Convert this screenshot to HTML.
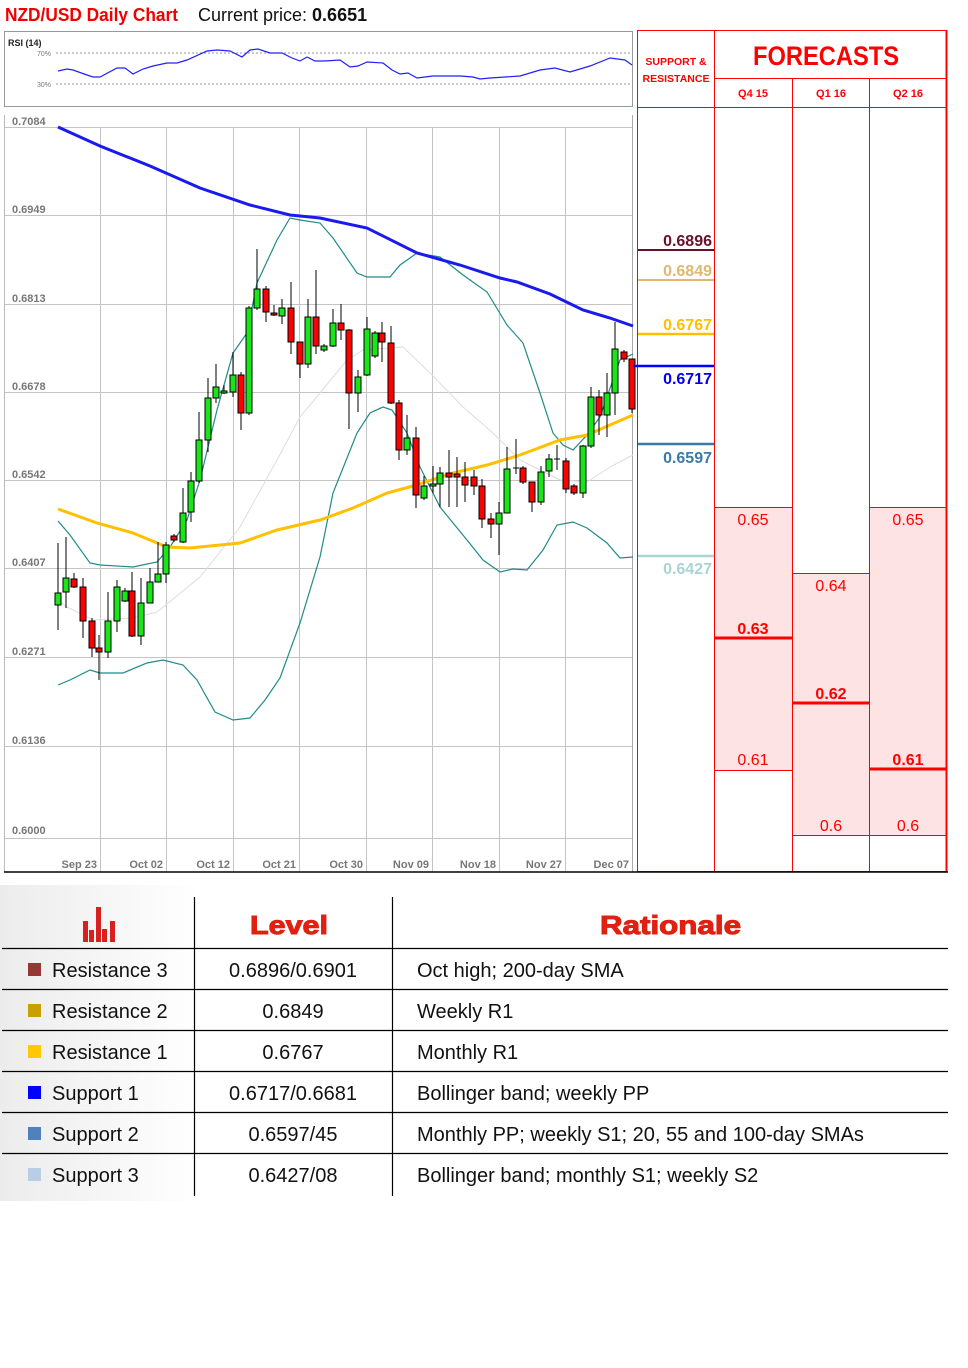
<!DOCTYPE html>
<html><head><meta charset="utf-8"><style>
body{margin:0;width:968px;height:1368px;background:#fff;overflow:hidden;font-family:"Liberation Sans",sans-serif;}
svg{position:absolute;left:0;top:0}
</style></head><body>
<svg width="968" height="1368" viewBox="0 0 968 1368" font-family="Liberation Sans, sans-serif">
<defs><linearGradient id="bg" x1="0" x2="1" y1="0" y2="0"><stop offset="0" stop-color="#ececec"/><stop offset="1" stop-color="#fff"/></linearGradient></defs>
<text x="5" y="21" font-size="18" font-weight="bold" fill="#f00000" textLength="173" lengthAdjust="spacingAndGlyphs">NZD/USD Daily Chart</text>
<text x="198" y="21" font-size="18" fill="#111">Current price: <tspan font-weight="bold">0.6651</tspan></text>
<rect x="4.5" y="31.5" width="628" height="75" fill="#fff" stroke="#999"/>
<text x="8" y="46" font-size="9" font-weight="bold" fill="#222">RSI (14)</text>
<text x="37" y="56" font-size="7" fill="#777">70%</text>
<text x="37" y="87" font-size="7" fill="#777">30%</text>
<line x1="56" x2="632" y1="53" y2="53" stroke="#777" stroke-dasharray="2,2" stroke-width="0.8"/>
<line x1="56" x2="632" y1="84" y2="84" stroke="#777" stroke-dasharray="2,2" stroke-width="0.8"/>
<polyline fill="none" stroke="#2020ff" stroke-width="1.2" points="58,71 67,69 73,70 87,75 93,77 100,77 117,68 125,68 133,74 143,69 153,66 167,63 177,63 187,60 207,51 217,50 230,51 242,57 250,50 258,49 270,53 282,53 292,58 300,61 307,57 315,61 325,61 340,60 350,67 358,66 367,62 383,63 392,70 400,74 408,73 417,78 433,76 447,76 460,76 473,77 480,79 490,78 520,76 540,70 555,68 570,72 590,66 610,58 625,60 632,65"/>
<line x1="4.5" x2="4.5" y1="115" y2="872" stroke="#bbb"/>
<line x1="632.5" x2="632.5" y1="115" y2="872" stroke="#aaa"/>
<g stroke="#c4c4c4" stroke-width="1">
<line x1="5" x2="632" y1="127.5" y2="127.5"/><line x1="5" x2="632" y1="215.5" y2="215.5"/><line x1="5" x2="632" y1="304.5" y2="304.5"/><line x1="5" x2="632" y1="392.5" y2="392.5"/><line x1="5" x2="632" y1="480.5" y2="480.5"/><line x1="5" x2="632" y1="568.5" y2="568.5"/><line x1="5" x2="632" y1="657.5" y2="657.5"/><line x1="5" x2="632" y1="746.5" y2="746.5"/><line x1="5" x2="632" y1="838.5" y2="838.5"/>
<line x1="100.5" x2="100.5" y1="127" y2="872"/><line x1="166.5" x2="166.5" y1="127" y2="872"/><line x1="233.5" x2="233.5" y1="127" y2="872"/><line x1="299.5" x2="299.5" y1="127" y2="872"/><line x1="366.5" x2="366.5" y1="127" y2="872"/><line x1="432.5" x2="432.5" y1="127" y2="872"/><line x1="499.5" x2="499.5" y1="127" y2="872"/><line x1="565.5" x2="565.5" y1="127" y2="872"/>
</g>
<g font-size="11" font-weight="bold" fill="#777">
<text x="12" y="125">0.7084</text><text x="12" y="213">0.6949</text><text x="12" y="302">0.6813</text><text x="12" y="390">0.6678</text><text x="12" y="478">0.6542</text><text x="12" y="566">0.6407</text><text x="12" y="655">0.6271</text><text x="12" y="744">0.6136</text><text x="12" y="834">0.6000</text>
</g>
<g font-size="11" font-weight="bold" fill="#777" text-anchor="end">
<text x="97" y="868">Sep 23</text><text x="163" y="868">Oct 02</text><text x="230" y="868">Oct 12</text><text x="296" y="868">Oct 21</text><text x="363" y="868">Oct 30</text><text x="429" y="868">Nov 09</text><text x="496" y="868">Nov 18</text><text x="562" y="868">Nov 27</text><text x="629" y="868">Dec 07</text>
</g>
<polyline fill="none" stroke="#ddd" stroke-width="1" points="58,600 67,607 93,620 133,618 157,612 200,577 240,527 277,460 300,417 320,393 347,360 363,350 403,347 430,373 463,407 493,433 520,460 560,480 587,482 610,467 633,455"/>
<polyline fill="none" stroke="#208a8a" stroke-width="1.2" points="58,521 70,535 90,563 100,565 133,567 157,562 170,547 187,520 200,480 217,410 233,353 247,333 257,283 277,240 290,218 300,220 320,223 333,238 357,273 367,277 390,277 400,265 417,253 440,257 463,275 487,292 507,325 523,343 540,393 553,433 563,445 573,450 587,435 600,417 620,360 633,354"/>
<polyline fill="none" stroke="#208a8a" stroke-width="1.2" points="58,685 70,680 90,670 100,673 123,673 147,663 163,660 183,665 197,680 215,712 233,720 250,718 265,700 280,678 300,623 320,557 333,493 357,433 370,413 383,407 392,410 407,433 420,467 440,507 467,540 483,560 500,572 513,569 527,570 543,550 557,525 573,522 587,528 607,543 620,558 633,557"/>
<polyline fill="none" stroke="#1a1aee" stroke-width="3" points="58,127 100,146 150,166 200,188 250,205 290,215 320,218 367,228 417,253 460,265 500,278 517,282 550,294 583,310 610,318 633,326"/>
<polyline fill="none" stroke="#ffc000" stroke-width="3" points="58,509 97,523 133,533 167,547 190,548 240,543 277,530 320,520 353,508 387,493 413,486 453,473 487,465 520,455 560,440 587,435 610,425 633,415"/>
</svg>
<svg width="968" height="1368" viewBox="0 0 968 1368" font-family="Liberation Sans, sans-serif">
<g stroke="#000" stroke-width="1">
<line x1="58" x2="58" y1="543" y2="630"/><rect x="55" y="593" width="6" height="12" fill="#19e619"/>
<line x1="66" x2="66" y1="537" y2="608"/><rect x="63" y="578" width="6" height="14" fill="#19e619"/>
<line x1="74" x2="74" y1="573" y2="588"/><rect x="71" y="579" width="6" height="8" fill="#f00"/>
<line x1="83" x2="83" y1="578" y2="638"/><rect x="80" y="587" width="6" height="34" fill="#f00"/>
<line x1="92" x2="92" y1="618" y2="657"/><rect x="89" y="621" width="6" height="27" fill="#f00"/>
<line x1="99" x2="99" y1="635" y2="680"/><rect x="96" y="648" width="6" height="4" fill="#f00"/>
<line x1="108" x2="108" y1="592" y2="658"/><rect x="105" y="621" width="6" height="31" fill="#19e619"/>
<line x1="117" x2="117" y1="580" y2="632"/><rect x="114" y="587" width="6" height="34" fill="#19e619"/>
<line x1="125" x2="125" y1="588" y2="602"/><rect x="122" y="591" width="6" height="10" fill="#19e619"/>
<line x1="132" x2="132" y1="572" y2="637"/><rect x="129" y="591" width="6" height="45" fill="#f00"/>
<line x1="141" x2="141" y1="578" y2="645"/><rect x="138" y="603" width="6" height="33" fill="#19e619"/>
<line x1="150" x2="150" y1="568" y2="603"/><rect x="147" y="582" width="6" height="21" fill="#19e619"/>
<line x1="158" x2="158" y1="542" y2="582"/><rect x="155" y="574" width="6" height="8" fill="#19e619"/>
<line x1="166" x2="166" y1="542" y2="583"/><rect x="163" y="545" width="6" height="29" fill="#19e619"/>
<line x1="174" x2="174" y1="534" y2="542"/><rect x="171" y="536" width="6" height="4" fill="#f00"/>
<line x1="183" x2="183" y1="488" y2="543"/><rect x="180" y="513" width="6" height="29" fill="#19e619"/>
<line x1="191" x2="191" y1="472" y2="522"/><rect x="188" y="481" width="6" height="31" fill="#19e619"/>
<line x1="199" x2="199" y1="412" y2="483"/><rect x="196" y="440" width="6" height="41" fill="#19e619"/>
<line x1="208" x2="208" y1="378" y2="452"/><rect x="205" y="398" width="6" height="42" fill="#19e619"/>
<line x1="216" x2="216" y1="364" y2="403"/><rect x="213" y="387" width="6" height="11" fill="#19e619"/>
<line x1="224" x2="224" y1="385" y2="394"/><rect x="221" y="391" width="6" height="2" fill="#19e619"/>
<line x1="233" x2="233" y1="352" y2="397"/><rect x="230" y="375" width="6" height="17" fill="#19e619"/>
<line x1="241" x2="241" y1="372" y2="430"/><rect x="238" y="375" width="6" height="38" fill="#f00"/>
<line x1="249" x2="249" y1="306" y2="415"/><rect x="246" y="308" width="6" height="105" fill="#19e619"/>
<line x1="257" x2="257" y1="249" y2="310"/><rect x="254" y="289" width="6" height="19" fill="#19e619"/>
<line x1="266" x2="266" y1="286" y2="322"/><rect x="263" y="289" width="6" height="23" fill="#f00"/>
<line x1="274" x2="274" y1="305" y2="316"/><rect x="271" y="313" width="6" height="2" fill="#f00"/>
<line x1="282" x2="282" y1="299" y2="324"/><rect x="279" y="308" width="6" height="8" fill="#19e619"/>
<line x1="291" x2="291" y1="282" y2="354"/><rect x="288" y="308" width="6" height="34" fill="#f00"/>
<line x1="300" x2="300" y1="342" y2="378"/><rect x="297" y="342" width="6" height="22" fill="#f00"/>
<line x1="308" x2="308" y1="299" y2="368"/><rect x="305" y="317" width="6" height="47" fill="#19e619"/>
<line x1="316" x2="316" y1="270" y2="354"/><rect x="313" y="317" width="6" height="29" fill="#f00"/>
<line x1="324" x2="324" y1="344" y2="352"/><rect x="321" y="346" width="6" height="4" fill="#19e619"/>
<line x1="333" x2="333" y1="309" y2="347"/><rect x="330" y="323" width="6" height="23" fill="#19e619"/>
<line x1="341" x2="341" y1="304" y2="340"/><rect x="338" y="323" width="6" height="7" fill="#f00"/>
<line x1="349" x2="349" y1="329" y2="429"/><rect x="346" y="330" width="6" height="63" fill="#f00"/>
<line x1="358" x2="358" y1="370" y2="412"/><rect x="355" y="377" width="6" height="16" fill="#19e619"/>
<line x1="367" x2="367" y1="317" y2="376"/><rect x="364" y="329" width="6" height="46" fill="#19e619"/>
<line x1="375" x2="375" y1="331" y2="358"/><rect x="372" y="333" width="6" height="23" fill="#19e619"/>
<line x1="382" x2="382" y1="322" y2="362"/><rect x="379" y="333" width="6" height="9" fill="#f00"/>
<line x1="391" x2="391" y1="326" y2="404"/><rect x="388" y="343" width="6" height="60" fill="#f00"/>
<line x1="399" x2="399" y1="400" y2="460"/><rect x="396" y="403" width="6" height="47" fill="#f00"/>
<line x1="407" x2="407" y1="415" y2="455"/><rect x="404" y="438" width="6" height="12" fill="#19e619"/>
<line x1="416" x2="416" y1="427" y2="508"/><rect x="413" y="438" width="6" height="57" fill="#f00"/>
<line x1="424" x2="424" y1="476" y2="500"/><rect x="421" y="486" width="6" height="12" fill="#19e619"/>
<line x1="433" x2="433" y1="466" y2="493"/><rect x="430" y="484" width="6" height="2" fill="#19e619"/>
<line x1="440" x2="440" y1="467" y2="507"/><rect x="437" y="473" width="6" height="11" fill="#19e619"/>
<line x1="449" x2="449" y1="450" y2="507"/><rect x="446" y="473" width="6" height="4" fill="#f00"/>
<line x1="457" x2="457" y1="457" y2="507"/><rect x="454" y="474" width="6" height="3" fill="#f00"/>
<line x1="465" x2="465" y1="462" y2="502"/><rect x="462" y="477" width="6" height="8" fill="#f00"/>
<line x1="474" x2="474" y1="470" y2="495"/><rect x="471" y="477" width="6" height="9" fill="#f00"/>
<line x1="482" x2="482" y1="479" y2="528"/><rect x="479" y="486" width="6" height="33" fill="#f00"/>
<line x1="491" x2="491" y1="513" y2="538"/><rect x="488" y="519" width="6" height="5" fill="#f00"/>
<line x1="499" x2="499" y1="502" y2="555"/><rect x="496" y="513" width="6" height="11" fill="#19e619"/>
<line x1="507" x2="507" y1="447" y2="513"/><rect x="504" y="469" width="6" height="44" fill="#19e619"/>
<line x1="516" x2="516" y1="439" y2="474"/><line x1="513" x2="519" y1="468" y2="468"/>
<line x1="523" x2="523" y1="466" y2="484"/><rect x="520" y="468" width="6" height="14" fill="#f00"/>
<line x1="532" x2="532" y1="482" y2="512"/><rect x="529" y="482" width="6" height="20" fill="#f00"/>
<line x1="541" x2="541" y1="466" y2="505"/><rect x="538" y="472" width="6" height="30" fill="#19e619"/>
<line x1="549" x2="549" y1="454" y2="477"/><rect x="546" y="459" width="6" height="12" fill="#19e619"/>
<line x1="557" x2="557" y1="445" y2="470"/><line x1="554" x2="560" y1="459" y2="459"/>
<line x1="566" x2="566" y1="458" y2="493"/><rect x="563" y="461" width="6" height="28" fill="#f00"/>
<line x1="574" x2="574" y1="484" y2="495"/><rect x="571" y="486" width="6" height="7" fill="#f00"/>
<line x1="583" x2="583" y1="445" y2="498"/><rect x="580" y="446" width="6" height="47" fill="#19e619"/>
<line x1="591" x2="591" y1="387" y2="448"/><rect x="588" y="397" width="6" height="49" fill="#19e619"/>
<line x1="599" x2="599" y1="390" y2="435"/><rect x="596" y="397" width="6" height="18" fill="#f00"/>
<line x1="607" x2="607" y1="373" y2="437"/><rect x="604" y="393" width="6" height="22" fill="#19e619"/>
<line x1="615" x2="615" y1="322" y2="415"/><rect x="612" y="349" width="6" height="44" fill="#19e619"/>
<line x1="624" x2="624" y1="350" y2="362"/><rect x="621" y="352" width="6" height="7" fill="#f00"/>
<line x1="632" x2="632" y1="359" y2="413"/><rect x="629" y="359" width="6" height="50" fill="#f00"/>
</g>
<rect x="714" y="507" width="78" height="263" fill="#fde3e3"/>
<rect x="792" y="573" width="77" height="262" fill="#fde3e3"/>
<rect x="869" y="507" width="78" height="328" fill="#fde3e3"/>
<g stroke="#f00" stroke-width="1" fill="none">
<rect x="637.5" y="30.5" width="309" height="841"/>
<line x1="714.5" x2="714.5" y1="30" y2="872"/>
<line x1="792.5" x2="792.5" y1="78" y2="872"/>
<line x1="869.5" x2="869.5" y1="78" y2="872"/>
<line x1="714" x2="947" y1="78.5" y2="78.5"/>
<line x1="637" x2="947" y1="107.5" y2="107.5"/>
<line x1="714" x2="792" y1="507.5" y2="507.5"/><line x1="869" x2="947" y1="507.5" y2="507.5"/>
<line x1="714" x2="792" y1="770.5" y2="770.5"/>
<line x1="792" x2="869" y1="573.5" y2="573.5"/>
<line x1="792" x2="947" y1="835.5" y2="835.5"/>
</g>
<line x1="946.5" x2="946.5" y1="30" y2="872" stroke="#f00" stroke-width="2"/>
<g stroke="#f00" stroke-width="3">
<line x1="714" x2="792" y1="638" y2="638"/><line x1="792" x2="869" y1="703" y2="703"/><line x1="869" x2="947" y1="769" y2="769"/>
</g>
<line x1="4" x2="948" y1="872" y2="872" stroke="#000" stroke-width="1.5"/>
<text x="676" y="65" font-size="10.5" font-weight="bold" fill="#f00" text-anchor="middle">SUPPORT &amp;</text>
<text x="676" y="82" font-size="10.5" font-weight="bold" fill="#f00" text-anchor="middle">RESISTANCE</text>
<text x="753" y="65" font-size="27" font-weight="bold" fill="#f00" textLength="146" lengthAdjust="spacingAndGlyphs">FORECASTS</text>
<g font-size="11" font-weight="bold" fill="#f00" text-anchor="middle"><text x="753" y="97">Q4 15</text><text x="831" y="97">Q1 16</text><text x="908" y="97">Q2 16</text></g>
<g font-size="16" fill="#f00" text-anchor="middle">
<text x="753" y="525">0.65</text><text x="753" y="765">0.61</text><text x="831" y="591">0.64</text><text x="831" y="831">0.6</text><text x="908" y="525">0.65</text><text x="908" y="831">0.6</text>
<text x="753" y="634" font-weight="bold">0.63</text><text x="831" y="699" font-weight="bold">0.62</text><text x="908" y="765" font-weight="bold">0.61</text>
</g>
<g stroke-width="2.5">
<line x1="638" x2="714" y1="250" y2="250" stroke="#6b0f2a" stroke-width="2"/>
<line x1="638" x2="714" y1="280" y2="280" stroke="#e0b870" stroke-width="2"/>
<line x1="638" x2="714" y1="334" y2="334" stroke="#ffc000"/>
<line x1="633" x2="714" y1="366" y2="366" stroke="#0000ff"/>
<line x1="638" x2="714" y1="444" y2="444" stroke="#3a7ca5"/>
<line x1="638" x2="714" y1="556" y2="556" stroke="#a9d4d4"/>
</g>
<g font-size="16" font-weight="bold" text-anchor="end">
<text x="712" y="246" fill="#6b0f2a">0.6896</text>
<text x="712" y="276" fill="#e0b870">0.6849</text>
<text x="712" y="330" fill="#ffc000">0.6767</text>
<text x="712" y="384" fill="#0000ee">0.6717</text>
<text x="712" y="463" fill="#3a7ca5">0.6597</text>
<text x="712" y="574" fill="#a9d4d4">0.6427</text>
</g>
<rect x="0" y="885" width="200" height="316" fill="url(#bg)"/>
<g fill="#d92020"><rect x="83" y="921" width="5" height="21"/><rect x="89" y="930" width="5" height="12"/><rect x="96" y="907" width="5" height="35"/><rect x="102" y="929" width="5" height="13"/><rect x="110" y="921" width="5" height="21"/></g>
<text x="250" y="934" font-size="26" font-weight="900" fill="#e02010" stroke="#e02010" stroke-width="1" textLength="78" lengthAdjust="spacingAndGlyphs">Level</text>
<text x="600" y="934" font-size="26" font-weight="900" fill="#e02010" stroke="#e02010" stroke-width="1" textLength="141" lengthAdjust="spacingAndGlyphs">Rationale</text>
<g stroke="#000" stroke-width="1.2">
<line x1="194.5" x2="194.5" y1="897" y2="1196"/><line x1="392.5" x2="392.5" y1="897" y2="1196"/>
<line x1="2" x2="948" y1="948.5" y2="948.5"/><line x1="2" x2="948" y1="989.5" y2="989.5"/><line x1="2" x2="948" y1="1030.5" y2="1030.5"/><line x1="2" x2="948" y1="1071.5" y2="1071.5"/><line x1="2" x2="948" y1="1112.5" y2="1112.5"/><line x1="2" x2="948" y1="1153.5" y2="1153.5"/>
</g>
<g><rect x="28" y="963" width="13" height="13" fill="#953735"/><rect x="28" y="1004" width="13" height="13" fill="#c9a000"/><rect x="28" y="1045" width="13" height="13" fill="#ffc800"/><rect x="28" y="1086" width="13" height="13" fill="#0000ff"/><rect x="28" y="1127" width="13" height="13" fill="#4f81bd"/><rect x="28" y="1168" width="13" height="13" fill="#b9cde5"/></g>
<g font-size="20" fill="#111">
<text x="52" y="977">Resistance 3</text><text x="52" y="1018">Resistance 2</text><text x="52" y="1059">Resistance 1</text><text x="52" y="1100">Support 1</text><text x="52" y="1141">Support 2</text><text x="52" y="1182">Support 3</text>
<g text-anchor="middle"><text x="293" y="977">0.6896/0.6901</text><text x="293" y="1018">0.6849</text><text x="293" y="1059">0.6767</text><text x="293" y="1100">0.6717/0.6681</text><text x="293" y="1141">0.6597/45</text><text x="293" y="1182">0.6427/08</text></g>
<text x="417" y="977">Oct high; 200-day SMA</text><text x="417" y="1018">Weekly R1</text><text x="417" y="1059">Monthly R1</text><text x="417" y="1100">Bollinger band; weekly PP</text><text x="417" y="1141">Monthly PP; weekly S1; 20, 55 and 100-day SMAs</text><text x="417" y="1182">Bollinger band; monthly S1; weekly S2</text>
</g>
</svg>
</body></html>
